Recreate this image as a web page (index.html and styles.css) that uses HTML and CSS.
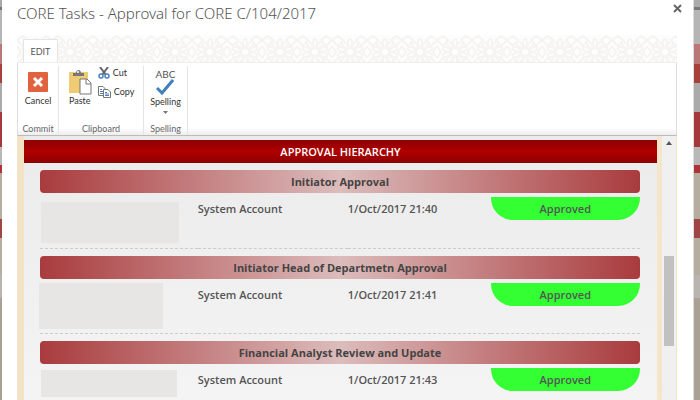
FILE: index.html
```html
<!DOCTYPE html>
<html lang="en">
<head>
  <meta charset="UTF-8">
  <title>CORE Tasks - Approval</title>
  <link rel="stylesheet" href="styles.css">
</head>
<body>

  <div class="dialog">
    <div class="dialog-title">
      <h1>CORE Tasks - Approval for CORE C/104/2017</h1>
      <button class="close" aria-label="Close">
        <svg width="9" height="9" viewBox="0 0 9 9"><path d="M1 1L8 8M8 1L1 8" stroke="#666" stroke-width="2"/></svg>
      </button>
    </div>

    <div class="ribbon-tabs">
      <svg class="pattern" width="100%" height="100%">
        <defs>
          <pattern id="flower" x="0" y="-1" width="35" height="36" patternUnits="userSpaceOnUse">
            <g fill="none" stroke="#f6f4f2" stroke-width="2">
              <circle cx="18" cy="18" r="4"/>
              <ellipse cx="18" cy="9" rx="2" ry="4"/>
              <ellipse cx="18" cy="9" rx="2" ry="4" transform="rotate(36 18 18)"/>
              <ellipse cx="18" cy="9" rx="2" ry="4" transform="rotate(72 18 18)"/>
              <ellipse cx="18" cy="9" rx="2" ry="4" transform="rotate(108 18 18)"/>
              <ellipse cx="18" cy="9" rx="2" ry="4" transform="rotate(144 18 18)"/>
              <ellipse cx="18" cy="9" rx="2" ry="4" transform="rotate(180 18 18)"/>
              <ellipse cx="18" cy="9" rx="2" ry="4" transform="rotate(216 18 18)"/>
              <ellipse cx="18" cy="9" rx="2" ry="4" transform="rotate(252 18 18)"/>
              <ellipse cx="18" cy="9" rx="2" ry="4" transform="rotate(288 18 18)"/>
              <ellipse cx="18" cy="9" rx="2" ry="4" transform="rotate(324 18 18)"/>
              <path d="M0 6L6 2L11 6L6 12Z M35 6L29 2L24 6L29 12Z M0 30L6 34L11 30L6 24Z M35 30L29 34L24 30L29 24Z M0 12L4 18L0 24 M35 12L31 18L35 24"/>
            </g>
          </pattern>
        </defs>
        <rect width="100%" height="100%" fill="url(#flower)"/>
      </svg>
      <button class="tab">EDIT</button>
    </div>

    <div class="ribbon">
      <div class="group commit">
        <div class="tools">
          <button class="tool">
            <svg width="20" height="20" viewBox="0 0 20 20"><rect width="20" height="20" rx="1" fill="#e0623f"/><path d="M6 6L14 14M14 6L6 14" stroke="#fff" stroke-width="3"/></svg>
            Cancel
          </button>
        </div>
        <div class="group-name">Commit</div>
      </div>
      <div class="group clipboard">
        <div class="tools">
          <button class="tool paste">
            <svg width="24" height="26" viewBox="0 0 24 26">
              <rect x="1" y="3" width="19" height="21" fill="#efcb74"/>
              <path d="M5 7V4H8C8 0 13 0 13 4H16V7Z" fill="#777"/>
              <circle cx="10" cy="3" r="1" fill="#fff"/>
              <path d="M12 10H19L23 14V25H12Z" fill="#fff" stroke="#777"/>
              <path d="M18 10V15H23" fill="none" stroke="#777"/>
            </svg>
            Paste
          </button>
          <div class="small-tools">
            <button class="small-tool">
              <svg width="12" height="12" viewBox="0 0 12 12">
                <path d="M2 0L8 8M10 0L4 8" stroke="#666" stroke-width="2"/>
                <g fill="#fff" stroke="#4a80b8" stroke-width="1.5"><circle cx="3" cy="9" r="2"/><circle cx="9" cy="9" r="2"/></g>
              </svg>
              Cut
            </button>
            <button class="small-tool">
              <svg width="13" height="12" viewBox="0 0 13 12">
                <g fill="#fff" stroke="#777"><path d="M.5 .5H5L7.500 3V9.500H.5Z"/><path d="M5.500 3.500H10L12.500 6V11.500H5.500Z"/></g>
                <path d="M2 3.500H4M2 5.500H5M2 7.500H5M7 6.500H9M7 8H11M7 9.500H11" stroke="#4a80b8"/>
              </svg>
              Copy
            </button>
          </div>
        </div>
        <div class="group-name">Clipboard</div>
      </div>
      <div class="group spelling">
        <div class="tools">
          <button class="tool">
            <span class="abc">ABC</span>
            <svg width="18" height="17" viewBox="0 0 18 17"><path d="M1 9L6 14L17 1" fill="none" stroke="#4180bd" stroke-width="3"/></svg>
            Spelling
            <svg class="caret" width="5" height="3" viewBox="0 0 5 3"><path d="M0 0H5L2.500 3Z" fill="#777"/></svg>
          </button>
        </div>
        <div class="group-name">Spelling</div>
      </div>
    </div>

    <div class="content">
      <div class="form">
        <h2>APPROVAL HIERARCHY</h2>
        <table class="approvals">
          <colgroup>
            <col class="col-user"><col class="col-name"><col class="col-date"><col class="col-status">
          </colgroup>
          <tbody>
            <tr><th colspan="4"><div class="bar">Initiator Approval</div></th></tr>
            <tr>
              <td><div class="blank blank-first"></div></td>
              <td>System Account</td>
              <td>1/Oct/2017 21:40</td>
              <td><div class="status">Approved</div></td>
            </tr>
          </tbody>
          <tbody>
            <tr><th colspan="4"><div class="bar">Initiator Head of Departmetn Approval</div></th></tr>
            <tr>
              <td><div class="blank blank-second"></div></td>
              <td>System Account</td>
              <td>1/Oct/2017 21:41</td>
              <td><div class="status">Approved</div></td>
            </tr>
          </tbody>
          <tbody>
            <tr><th colspan="4"><div class="bar">Financial Analyst Review and Update</div></th></tr>
            <tr>
              <td><div class="blank blank-third"></div></td>
              <td>System Account</td>
              <td>1/Oct/2017 21:43</td>
              <td><div class="status">Approved</div></td>
            </tr>
          </tbody>
        </table>
      </div>
      <div class="scrollbar">
        <svg width="6" height="4" viewBox="0 0 6 4"><path d="M0 4L3 0L6 4Z" fill="#555"/></svg>
        <div class="thumb"></div>
      </div>
    </div>
  </div>

</body>
</html>
```
FILE: styles.css
```css
* {
  box-sizing: border-box;
}

body {
  margin: 0;
  height: 100vh;
  overflow: hidden;
  padding: 0 6px 0 2px;
  font-family: "Open Sans", "Noto Sans", sans-serif;
  font-size: 11px;
  color: #555;
  background: linear-gradient(#aaa 0 7px, #777 7px 10px, #b5b5b5 10px 44px, #b77 44px 64px, #a5403a 64px 83px, #aaa 83px 112px, #a5383b 112px 147px, #b8b8b8 147px 165px, #ad3336 165px 173px, #b5ada0 173px 219px, #a04545 219px 238px, #b5ada0 238px 275px, #b8b5b1 275px 298px, #aaa094 298px);
}

.dialog {
  display: flex;
  flex-direction: column;
  height: 100%;
  padding: 0 16px 0 15px;
  background: #fff;
  border-right: 1px solid #ddd;
}

button {
  border: none;
  padding: 0;
  background: none;
  font: inherit;
  color: inherit;
  cursor: pointer;
}

.dialog-title {
  display: flex;
  justify-content: space-between;
  flex: none;
  height: 35px;
  margin-right: -5px;
}

h1 {
  margin: 0;
  font-family: "Noto Sans", sans-serif;
  font-size: 15px;
  font-weight: 300;
  line-height: 26px;
  color: #555;
}

.close {
  height: 16px;
}

.close svg {
  display: block;
}

.ribbon-tabs {
  position: relative;
  flex: none;
  height: 27px;
  padding: 4px 6px 0;
  background: #fefdfd;
}

.pattern {
  position: absolute;
  inset: 0;
}

.tab {
  position: relative;
  width: 35px;
  height: 23px;
  border: 1px solid #e5e5e5;
  border-bottom: none;
  background: #fff;
  font-family: Lato, sans-serif;
  font-size: 9px;
}

.ribbon {
  display: flex;
  flex: none;
  height: 74px;
  border: 1px solid #ddd;
  border-top-color: #eee;
  border-bottom-color: #bbb;
  background: linear-gradient(#fff 90%, #eee);
  font-family: Lato, sans-serif;
}

.group {
  display: flex;
  flex-direction: column;
  justify-content: space-between;
  margin: 3px 0 1px;
  border-right: 1px solid #e5e5e5;
  font-size: 9px;
  line-height: 12px;
}

.commit {
  width: 41px;
}

.clipboard {
  width: 85px;
}

.spelling {
  width: 44px;
}

.tools {
  display: flex;
  justify-content: center;
}

.tool {
  display: flex;
  flex-direction: column;
  align-items: center;
  color: #333;
}

.commit .tool {
  padding-top: 6px;
  gap: 3px;
}

.paste {
  padding-top: 3px;
}

.clipboard .tools {
  gap: 6px;
}

.small-tools {
  display: flex;
  flex-direction: column;
  align-items: flex-start;
  gap: 7px;
  padding-top: 1px;
}

.small-tool {
  display: flex;
  align-items: center;
  gap: 3px;
  color: #333;
}

.abc {
  font-size: 10px;
  line-height: 10px;
  margin-top: 3px;
  color: #555;
}

.caret {
  margin-top: 3px;
}

.group-name {
  text-align: center;
  line-height: 10px;
  color: #666;
}

.content {
  display: flex;
  flex: 1;
  min-height: 0;
  overflow: hidden;
  border-right: 1px solid #f3e5c5;
}

.form {
  flex: 1;
  padding-top: 4px;
  border-left: 7px solid #f1e3c3;
  border-right: 5px solid #f3e6ca;
  background: linear-gradient(#ebebeb, #f4f4f4);
}

h2 {
  margin: 0;
  font-size: 11px;
  font-weight: 600;
  line-height: 23px;
  text-align: center;
  color: #fff;
  background: linear-gradient(#8c0000, #b00000 50%, #8c0000);
}

.approvals {
  width: calc(100% - 33px);
  margin: 0 17px 0 16px;
  table-layout: fixed;
  border-collapse: collapse;
}

.col-user {
  width: 26.3%;
}

.col-name {
  width: 25%;
}

.col-date {
  width: 23.8%;
}

.col-status {
  width: 24.9%;
}

th {
  padding: 7px 0 0;
}

.bar {
  line-height: 23px;
  border-radius: 4px;
  font-weight: 700;
  color: #444;
  background: linear-gradient(90deg, #a93b3d, #dcbcbc 50%, #a93b3d);
}

td {
  padding: 4px 0 0;
  line-height: 24px;
  font-weight: 600;
  vertical-align: top;
  border-bottom: 1px dashed #ccc;
}

.blank {
  background: #e7e6e4;
}

.blank-first {
  width: 138px;
  height: 41px;
  margin: 5px 1px;
}

.blank-second {
  width: 124px;
  height: 46px;
  margin: 0 -1px 4px;
}

.blank-third {
  width: 136px;
  height: 27px;
  margin: 2px 1px 20px;
}

.status {
  line-height: 23px;
  text-align: center;
  border-radius: 0 0 22px 22px;
  background: #33ff33;
}

.scrollbar {
  display: flex;
  flex-direction: column;
  align-items: center;
  width: 14px;
  padding-top: 5px;
  background: #f0f0f0;
}

.thumb {
  width: 10px;
  height: 90px;
  margin-top: 111px;
  background: #c1c1c1;
}
```
